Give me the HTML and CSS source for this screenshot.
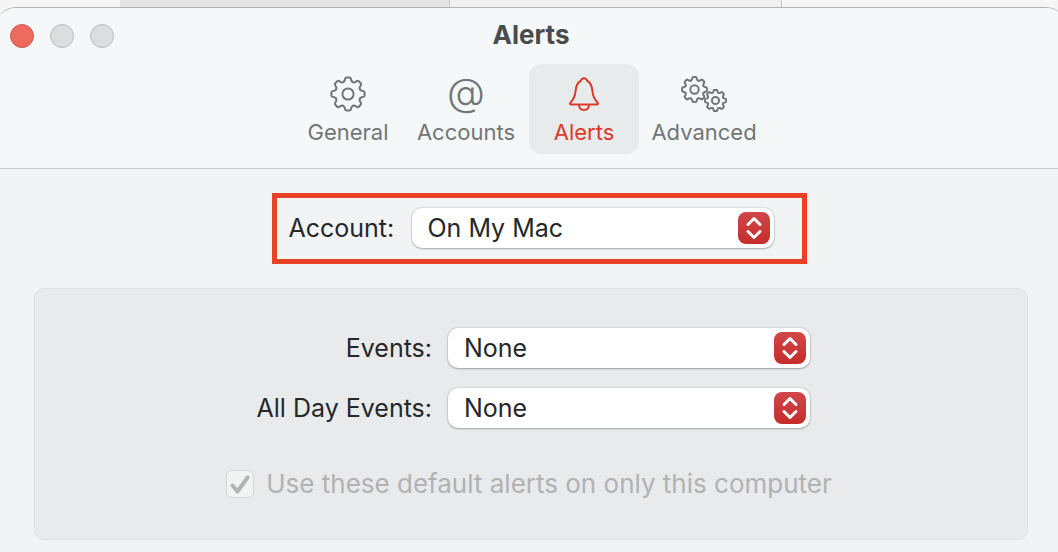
FILE: index.html
```html
<!DOCTYPE html>
<html lang="en">
  <head>
    <meta charset="UTF-8" />
    <meta name="viewport" content="width=device-width, initial-scale=1.0" />
    <title>Alerts</title>
    <link rel="stylesheet" href="styles.css">
  </head>
  <body>
    <!-- Shared icon shapes -->
    <svg class="defs" aria-hidden="true">
      <defs>
        <path id="tooth" vector-effect="non-scaling-stroke" d="M-4.9-11.8Q-3.7-12.3-3.3-13.6L-2.9-15.3Q-2.6-16.6-1.4-16.6H1.4Q2.6-16.6 2.9-15.3L3.3-13.6Q3.7-12.3 4.9-11.8" />
        <symbol id="gear" viewBox="-18 -18 36 36">
          <use href="#tooth" />
          <use href="#tooth" transform="rotate(45)" />
          <use href="#tooth" transform="rotate(90)" />
          <use href="#tooth" transform="rotate(135)" />
          <use href="#tooth" transform="rotate(180)" />
          <use href="#tooth" transform="rotate(225)" />
          <use href="#tooth" transform="rotate(270)" />
          <use href="#tooth" transform="rotate(315)" />
          <circle r="5.6" vector-effect="non-scaling-stroke" />
        </symbol>
        <symbol id="chevrons" viewBox="0 0 32 32">
          <path d="M10 12.500 16 6.500l6 6M10 19.500l6 6 6-6" />
        </symbol>
      </defs>
    </svg>

    <div class="backdrop">
      <span class="sidebar"></span>
      <span class="list"></span>
      <span class="detail"></span>
    </div>

    <div class="window">
      <header class="titlebar">
        <div class="lights">
          <button class="light close" aria-label="Close"></button>
          <button class="light" aria-label="Minimize"></button>
          <button class="light" aria-label="Zoom"></button>
        </div>
        <h1>Alerts</h1>
        <nav class="toolbar">
          <button class="tab">
            <span class="icon"><svg width="36" height="36"><use href="#gear" /></svg></span>
            General
          </button>
          <button class="tab">
            <span class="icon at">@</span>
            Accounts
          </button>
          <button class="tab active">
            <span class="icon">
              <svg width="36" height="36" viewBox="0 0 36 36">
                <path d="M5 28.500C3.800 28.500 3.700 27.500 4.500 26.500 8 23 9 21 9.500 15.500 10 9 11.500 6.500 14.700 5 15.700 1.300 20.300 1.300 21.300 5 24.500 6.500 26 9 26.500 15.500 27 21 28 23 31.500 26.500 32.300 27.500 32.200 28.500 31 28.500Z" />
                <path d="M13 29C13.500 35.700 22.500 35.700 23 29" />
              </svg>
            </span>
            Alerts
          </button>
          <button class="tab wide">
            <span class="icon">
              <svg width="48" height="38" viewBox="0 0 48 38">
                <use href="#gear" x="1" y="1" width="27" height="27" />
                <use href="#gear" x="24" y="14" width="23" height="23" />
              </svg>
            </span>
            Advanced
          </button>
        </nav>
      </header>

      <main>
        <div class="account-row">
          <div class="account">
            <label for="account">Account:</label>
            <div class="popup">
              <select id="account">
                <option>On My Mac</option>
              </select>
              <svg class="chip"><use href="#chevrons" /></svg>
            </div>
          </div>
        </div>

        <section class="panel">
          <div class="fields">
            <label for="events">Events:</label>
            <div class="popup">
              <select id="events">
                <option>None</option>
              </select>
              <svg class="chip"><use href="#chevrons" /></svg>
            </div>

            <label for="allDay">All Day Events:</label>
            <div class="popup">
              <select id="allDay">
                <option>None</option>
              </select>
              <svg class="chip"><use href="#chevrons" /></svg>
            </div>
          </div>

          <div class="default-alerts">
            <span class="check">
              <input type="checkbox" id="defaults" checked disabled />
              <svg viewBox="0 0 28 28"><path d="M6.500 15.500l5 6 10-14" /></svg>
            </span>
            <label for="defaults">Use these default alerts on only this computer</label>
          </div>
        </section>
      </main>
    </div>
  </body>
</html>
```

FILE: styles.css
```css
:root {
  --accent: #db3a29;
  --highlight: #e94125;
  --text: #262728;
  --muted: #737576;
}

* {
  box-sizing: border-box;
}

body {
  margin: 0;
  min-height: 100vh;
  display: flex;
  flex-direction: column;
  overflow-x: hidden;
  font-family: Inter, "Liberation Sans", sans-serif;
  font-size: 25px;
  color: var(--text);
  background: #f0f0f0;
}

.defs {
  position: absolute;
  width: 0;
  height: 0;
}

button,
select {
  font: inherit;
  color: inherit;
}

/* Window behind the dialog */
.backdrop {
  display: flex;
  height: 24px;
  margin-bottom: -17px;
  background: #f5f5f5;
}

.sidebar {
  width: 120px;
}

.list {
  width: 330px;
  background: #e5e5e5;
  border-right: 1px solid #c8c8c8;
}

.detail {
  width: 332px;
  background: #f0f0f0;
  border-right: 1px solid #c8c8c8;
}

.window {
  flex: 1;
  display: flex;
  flex-direction: column;
  margin: 0 -8px 0 -4px;
  border-top: 1px solid #b2b3b3;
  border-radius: 20px 20px 0 0;
  background: #f1f3f5;
  overflow: hidden;
}

.titlebar {
  position: relative;
  padding: 8px 0 14px;
  background: #f4f8f9;
  border-bottom: 1px solid #c9cbcc;
}

.lights {
  position: absolute;
  top: 16px;
  left: 14px;
  display: flex;
  gap: 16px;
}

.light {
  width: 24px;
  height: 24px;
  padding: 0;
  border: 1px solid #b9bcbd;
  border-radius: 50%;
  background: #dadedf;
}

.light.close {
  border-color: #d6584d;
  background: #ec6a5e;
}

h1 {
  margin: 0;
  font-size: 26px;
  font-weight: 700;
  line-height: 38px;
  text-align: center;
  color: #4a4c4c;
}

.toolbar {
  display: flex;
  justify-content: center;
  gap: 8px;
  margin-top: 10px;
  padding-right: 8px;
}

.tab {
  width: 110px;
  height: 90px;
  padding: 11px 0 0;
  display: flex;
  flex-direction: column;
  align-items: center;
  border: 0;
  border-radius: 12px;
  background: none;
  font-size: 22px;
  line-height: 30px;
  color: var(--muted);
}

.tab.wide {
  width: 114px;
}

.tab.active {
  background: #e7ebec;
  color: var(--accent);
}

.icon {
  display: flex;
  align-items: center;
  height: 38px;
  margin-bottom: 4px;
}

.icon svg {
  fill: none;
  stroke: currentColor;
  stroke-width: 2;
  stroke-linecap: round;
  stroke-linejoin: round;
}

.at {
  padding-bottom: 5px;
  font-size: 39px;
  font-weight: 300;
}

main {
  padding: 24px 38px 12px;
}

.account-row {
  display: flex;
  justify-content: center;
  margin-bottom: 24px;
  padding-left: 16px;
}

.account {
  display: flex;
  align-items: center;
  justify-content: space-between;
  width: 535px;
  padding: 10px 28px 11px 12px;
  border: 5px solid var(--highlight);
}

.popup {
  position: relative;
  width: 362px;
}

select {
  display: block;
  width: 100%;
  height: 40px;
  padding: 0 48px 1px 16px;
  appearance: none;
  border: 0;
  border-radius: 10px;
  background: #fff;
  box-shadow: 0 0 1px 1px rgba(0, 0, 0, 0.08), 0 1px 2px rgba(0, 0, 0, 0.25);
}

.chip {
  position: absolute;
  top: 4px;
  right: 4px;
  width: 32px;
  height: 32px;
  border-radius: 8px;
  background: linear-gradient(#d2474a, #c42d2a);
  fill: none;
  stroke: #fff;
  stroke-width: 3;
  stroke-linecap: round;
  stroke-linejoin: round;
  pointer-events: none;
}

.panel {
  padding: 39px 0;
  border: 1px solid #dfe1e2;
  border-radius: 10px;
  background: #e8eaeb;
}

.fields {
  display: grid;
  grid-template-columns: 180px 362px;
  justify-content: center;
  align-items: center;
  gap: 20px 16px;
}

label {
  padding-bottom: 1px;
}

.fields label {
  text-align: right;
}

.default-alerts {
  display: flex;
  align-items: center;
  justify-content: center;
  gap: 12px;
  margin-top: 40px;
  padding-right: 4px;
  font-size: 26px;
  line-height: 32px;
  color: #b0b2b3;
}

.default-alerts label {
  padding: 0;
}

.check {
  position: relative;
  width: 28px;
  height: 28px;
}

.check input {
  display: block;
  width: 28px;
  height: 28px;
  margin: 0;
  appearance: none;
  border: 1px solid #d5d7d8;
  border-radius: 6px;
  background: #f2f4f4;
}

.check svg {
  position: absolute;
  inset: 0;
  fill: none;
  stroke: #b3b5b5;
  stroke-width: 4;
  stroke-linecap: round;
  stroke-linejoin: round;
  pointer-events: none;
}
```
